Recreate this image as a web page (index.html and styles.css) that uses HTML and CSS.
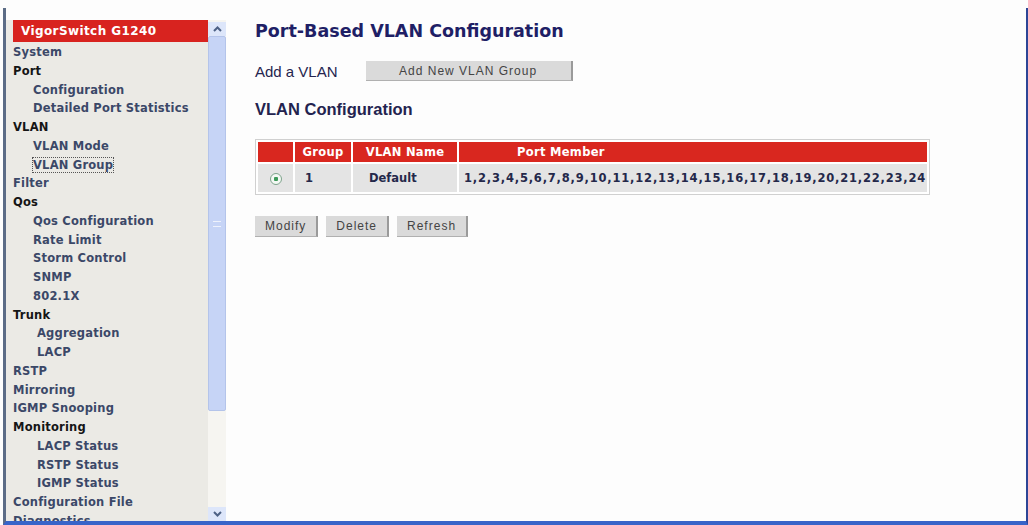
FILE: index.html
```html
<!DOCTYPE html>
<html lang="en">
<head>
    <meta charset="UTF-8">
    <title>VigorSwitch G1240 - VLAN Group</title>
    <link rel="stylesheet" href="styles.css">
</head>
<body>
    <div class="window">
        <div class="sidebar">
            <div class="nav">
                <div class="brand">VigorSwitch G1240</div>
                <ul class="menu">
                    <li class="leaf">System</li>
                    <li class="group">Port</li>
                    <li class="sub">Configuration</li>
                    <li class="sub">Detailed Port Statistics</li>
                    <li class="group">VLAN</li>
                    <li class="sub">VLAN Mode</li>
                    <li class="sub"><span class="current">VLAN Group</span></li>
                    <li class="leaf">Filter</li>
                    <li class="group">Qos</li>
                    <li class="sub">Qos Configuration</li>
                    <li class="sub">Rate Limit</li>
                    <li class="sub">Storm Control</li>
                    <li class="sub">SNMP</li>
                    <li class="sub">802.1X</li>
                    <li class="group">Trunk</li>
                    <li class="sub deep">Aggregation</li>
                    <li class="sub deep">LACP</li>
                    <li class="leaf">RSTP</li>
                    <li class="leaf">Mirroring</li>
                    <li class="leaf">IGMP Snooping</li>
                    <li class="group">Monitoring</li>
                    <li class="sub deep">LACP Status</li>
                    <li class="sub deep">RSTP Status</li>
                    <li class="sub deep">IGMP Status</li>
                    <li class="leaf">Configuration File</li>
                    <li class="leaf">Diagnostics</li>
                </ul>
            </div>
            <div class="scrollbar">
                <div class="arrow">
                    <svg width="9" height="6" viewBox="0 0 9 6"><path d="M1 5 L4.5 1.5 L8 5" fill="none" stroke="#4d6185" stroke-width="2"/></svg>
                </div>
                <div class="thumb"><span class="grip"></span></div>
                <div class="track"></div>
                <div class="arrow">
                    <svg width="9" height="6" viewBox="0 0 9 6"><path d="M1 1 L4.5 4.5 L8 1" fill="none" stroke="#4d6185" stroke-width="2"/></svg>
                </div>
            </div>
        </div>

        <div class="main">
            <h1 class="title">Port-Based VLAN Configuration</h1>

            <div class="add-row">
                <span class="add-label">Add a VLAN</span>
                <button class="btn wide">Add New VLAN Group</button>
            </div>

            <h2 class="section">VLAN Configuration</h2>

            <table class="vlan-table">
                <thead>
                    <tr>
                        <th class="col-sel"></th>
                        <th class="col-group">Group</th>
                        <th class="col-name">VLAN Name</th>
                        <th class="col-ports">Port Member</th>
                    </tr>
                </thead>
                <tbody>
                    <tr>
                        <td class="col-sel"><span class="radio"></span></td>
                        <td class="col-group">1</td>
                        <td class="col-name">Default</td>
                        <td class="col-ports">1,2,3,4,5,6,7,8,9,10,11,12,13,14,15,16,17,18,19,20,21,22,23,24</td>
                    </tr>
                </tbody>
            </table>

            <div class="actions">
                <button class="btn">Modify</button>
                <button class="btn">Delete</button>
                <button class="btn">Refresh</button>
            </div>
        </div>
    </div>
</body>
</html>
```

FILE: styles.css
```css
* {
    margin: 0;
    padding: 0;
    box-sizing: border-box;
}

body {
    width: 1028px;
    height: 525px;
    overflow: hidden;
    background: #fdfdfd;
    font-family: 'DejaVu Sans', Verdana, sans-serif;
}

.window {
    display: flex;
    height: 517px;
    margin: 8px 0 0 3px;
    border-left: 3px solid #5c6c86;
    border-right: 2px solid #2c4596;
    border-bottom: 4px solid #3864c9;
}

/* left frame with the menu tree */
.sidebar {
    display: flex;
    width: 220px;
    margin-top: 12px;
    background: #ebeae5;
    overflow: hidden;
}

.nav {
    width: 202px;
    padding-left: 7px;
    overflow: hidden;
}

.brand {
    height: 22px;
    line-height: 22px;
    padding-left: 8px;
    background: #d8231f;
    color: #fff;
    font-weight: bold;
    font-size: 12px;
    letter-spacing: 0.4px;
}

.menu {
    list-style: none;
    padding-top: 1px;
    font-weight: bold;
    font-size: 11.5px;
    line-height: 18.75px;
    letter-spacing: 0.2px;
    white-space: nowrap;
}

.menu .group {
    color: #151515;
}

.menu .leaf {
    color: #3b4868;
}

.menu .sub {
    color: #3b4868;
    padding-left: 20px;
}

.menu .sub.deep {
    padding-left: 24px;
}

.menu .current {
    outline: 1px dotted #555;
}

.scrollbar {
    display: flex;
    flex-direction: column;
    width: 18px;
    padding-top: 2px;
    background: #f6f5f1;
}

.scrollbar .arrow {
    display: flex;
    align-items: center;
    justify-content: center;
    height: 14px;
    background: #dde6fa;
}

.scrollbar .thumb {
    display: flex;
    align-items: center;
    justify-content: center;
    height: 375px;
    background: #c6d4f6;
    border: 1px solid #b4c4ea;
    border-radius: 2px;
}

.scrollbar .grip {
    width: 8px;
    height: 6px;
    border-top: 1px solid #eef2fc;
    border-bottom: 1px solid #eef2fc;
}

.scrollbar .track {
    flex: 1;
}

/* right frame */
.main {
    flex: 1;
    padding: 12px 0 0 29px;
    background: #fdfdfd;
    color: #20205e;
}

.title {
    font-size: 17.5px;
    line-height: 22px;
    color: #1f1f66;
}

.add-row {
    display: flex;
    align-items: center;
    gap: 28px;
    margin-top: 19px;
}

.add-label {
    font-family: 'Liberation Sans', Arial, sans-serif;
    font-size: 15px;
    color: #25254f;
}

.btn {
    height: 21px;
    padding: 0 10px;
    background: #dadada;
    border: none;
    border-right: 2px solid #9a9a9a;
    border-bottom: 1px solid #b0b0b0;
    font-family: 'Liberation Sans', Arial, sans-serif;
    font-size: 12px;
    letter-spacing: 1px;
    color: #444;
}

.btn.wide {
    width: 207px;
    height: 20px;
}

.section {
    margin-top: 18px;
    font-family: 'Liberation Sans', Arial, sans-serif;
    font-size: 16.5px;
    line-height: 20px;
    color: #23234f;
}

.vlan-table {
    width: 675px;
    margin-top: 20px;
    border-collapse: separate;
    border-spacing: 2px;
    background: #fff;
    border: 1px solid #d0d0d0;
    font-size: 11.5px;
}

.vlan-table th {
    height: 20px;
    background: #d9271f;
    color: #fff;
    font-weight: bold;
    text-align: center;
    letter-spacing: 0.3px;
}

.vlan-table td {
    height: 28px;
    background: #e4e4e4;
    color: #24284a;
    font-weight: bold;
    text-align: left;
}

.vlan-table .col-sel {
    width: 35px;
    text-align: center;
}

.vlan-table .col-group {
    width: 56px;
}

.vlan-table .col-name {
    width: 104px;
}

.vlan-table th.col-ports {
    text-align: left;
    padding-left: 58px;
}

.vlan-table td.col-group {
    padding-left: 10px;
}

.vlan-table td.col-name {
    padding-left: 16px;
}

.vlan-table td.col-ports {
    padding-left: 5px;
    letter-spacing: 0.8px;
}

.radio {
    display: inline-block;
    width: 12px;
    height: 12px;
    border: 1px solid #7fa48c;
    border-radius: 50%;
    background: radial-gradient(circle, #3e9a5a 0 2px, #f4f8f4 2.5px);
    vertical-align: middle;
}

.actions {
    display: flex;
    gap: 8px;
    margin-top: 21px;
}
```
